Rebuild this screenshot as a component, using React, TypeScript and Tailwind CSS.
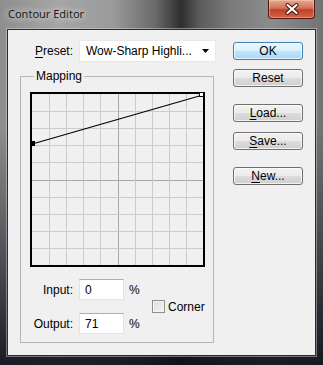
import React from 'react';

const GRID = 17.1;

function Graph() {
  const ticks = [1, 2, 3, 4, 5, 6, 7, 8, 9];
  return (
    <div className="w-[175px] h-[175px] border-2 border-black bg-[#f0f0f0] ml-[9px] mt-[9px]">
      <svg width="171" height="171" viewBox="0 0 171 171" className="block overflow-visible" shapeRendering="crispEdges">
        {ticks.map(i => {
          const p = Math.round(i * GRID) + 0.5;
          const c = i === 5 ? '#a9a9a9' : '#cbcbcb';
          return (
            <g key={i}>
              <line x1={p} y1={0} x2={p} y2={171} stroke={c} strokeWidth="1" />
              <line x1={0} y1={p} x2={171} y2={p} stroke={c} strokeWidth="1" />
            </g>
          );
        })}
        <line x1="2" y1="49.5" x2="169" y2="1.5" stroke="#000" strokeWidth="1.2" shapeRendering="auto" />
        <rect x="-2" y="47" width="5" height="5" fill="#000" />
        <rect x="167.5" y="-1.5" width="4" height="4" fill="#fff" stroke="#000" strokeWidth="1" />
      </svg>
    </div>
  );
}

interface BtnProps {
  children: React.ReactNode;
  primary?: boolean;
  className?: string;
}

const Btn: React.FC<BtnProps> = ({ children, primary, className }) => (
  <div
    className={`w-[70px] h-[18px] rounded-[3px] border flex items-center justify-center text-[12px] leading-none text-black shadow-[inset_0_0_0_1px_rgba(255,255,255,0.7)] ${
      primary
        ? 'border-[#3c7fb1] bg-[linear-gradient(to_bottom,#eaf6fd_0%,#d9f0fc_50%,#bee6fd_50%,#a7d9f5_100%)]'
        : 'border-[#707070] bg-[linear-gradient(to_bottom,#f2f2f2_0%,#ebebeb_50%,#dddddd_50%,#cfcfcf_100%)]'
    } ${className ?? ''}`}
  >
    <span>{children}</span>
  </div>
);

const Field: React.FC<{ value: string }> = ({ value }) => (
  <div className="w-[45px] h-[21px] bg-white border border-[#e2e3ea] border-t-[#abadb3] flex items-center pl-[5px] text-[12px]">
    {value}
  </div>
);

export default function App() {
  return (
    <div className="w-[323px] h-[365px] flex flex-col overflow-hidden font-['Liberation_Sans',Arial,sans-serif] text-black bg-[linear-gradient(to_bottom,rgba(0,0,0,0)_0%,rgba(0,0,0,0)_35%,rgba(12,14,24,0.9)_100%),linear-gradient(to_right,#8e8e8e_0%,#a6a6a6_18%,#9a9a9a_35%,#6a6a6a_48%,#2f2f2f_56%,#5c5c5c_62%,#7c7c7c_72%,#8c8c8c_84%,#737373_100%)]">
      <div className="h-[29px] flex shrink-0">
        <div className="pl-[8px] pt-[7px] text-[11px] leading-[14px] text-[#1a1a1a] font-['Noto_Sans',sans-serif] [text-shadow:0_0_6px_rgba(235,235,235,0.9),0_0_10px_rgba(235,235,235,0.7)]">
          Contour Editor
        </div>
        <div className="ml-auto mr-[8px] w-[47px] h-[19px] rounded-b-[4px] border border-t-0 border-[#4a1a12] bg-[linear-gradient(to_bottom,#e6a995_0%,#d27257_45%,#c0412a_55%,#d46445_100%)] shadow-[inset_0_0_0_1px_rgba(255,210,190,0.45)] flex items-center justify-center">
          <svg width="14" height="12" viewBox="0 0 14 12">
            <path d="M2.5 2 L11.5 10 M11.5 2 L2.5 10" stroke="#3a1008" strokeWidth="4" strokeLinecap="round" />
            <path d="M2.5 2 L11.5 10 M11.5 2 L2.5 10" stroke="#fff" strokeWidth="2.2" strokeLinecap="round" />
          </svg>
        </div>
      </div>

      <div className="mx-[7px] mb-[9px] flex-1 flex bg-[#f0f0f0] border border-[#2c2c30] shadow-[0_0_0_1px_rgba(220,220,220,0.45)]">
        {/* left column */}
        <div className="w-[196px] ml-[12px] pt-[10px] flex flex-col">
          <div className="flex items-center h-[22px]">
            <div className="w-[59px] pr-[6px] text-right text-[12px]">
              <span className="underline underline-offset-[2px]">P</span>reset:
            </div>
            <div className="w-[137px] h-[22px] bg-white border border-[#e8e8e8] flex items-center pl-[6px] pr-[6px] text-[12px]">
              <span className="flex-1">Wow-Sharp Highli...</span>
              <svg width="7" height="4" viewBox="0 0 7 4" className="mr-[0px]">
                <path d="M0 0 H7 L3.5 4 Z" fill="#000" />
              </svg>
            </div>
          </div>

          <fieldset className="mt-[7px] w-[194px] border border-[#b5b5b5] pb-[8px]">
            <legend className="ml-[13px] px-[2px] text-[12px] leading-[14px]">Mapping</legend>
            <Graph />
            <div className="mt-[12px] flex items-center">
              <div className="flex flex-col gap-[13px]">
                <div className="flex items-center h-[21px]">
                  <div className="w-[52px] text-right text-[12px]">Input:</div>
                  <div className="ml-[6px]"><Field value="0" /></div>
                  <div className="ml-[5px] w-[12px] text-[12px]">%</div>
                </div>
                <div className="flex items-center h-[21px]">
                  <div className="w-[52px] text-right text-[12px]">Output:</div>
                  <div className="ml-[6px]"><Field value="71" /></div>
                  <div className="ml-[5px] w-[12px] text-[12px]">%</div>
                </div>
              </div>
              <div className="ml-[11px] flex items-center">
                <div className="w-[13px] h-[13px] border border-[#8e8f8f] bg-[linear-gradient(135deg,#dcdcdc_0%,#f4f4f4_100%)] shadow-[inset_0_0_0_1px_#f4f4f4]" />
                <span className="ml-[3px] text-[12px]">Corner</span>
              </div>
            </div>
          </fieldset>
        </div>

        {/* right column */}
        <div className="ml-[17px] pt-[12px] flex flex-col">
          <Btn primary>OK</Btn>
          <Btn className="mt-[9px]">Reset</Btn>
          <Btn className="mt-[17px]"><span className="underline underline-offset-[2px]">L</span>oad...</Btn>
          <Btn className="mt-[10px]"><span className="underline underline-offset-[2px]">S</span>ave...</Btn>
          <Btn className="mt-[17px]"><span className="underline underline-offset-[2px]">N</span>ew...</Btn>
        </div>
      </div>
    </div>
  );
}
